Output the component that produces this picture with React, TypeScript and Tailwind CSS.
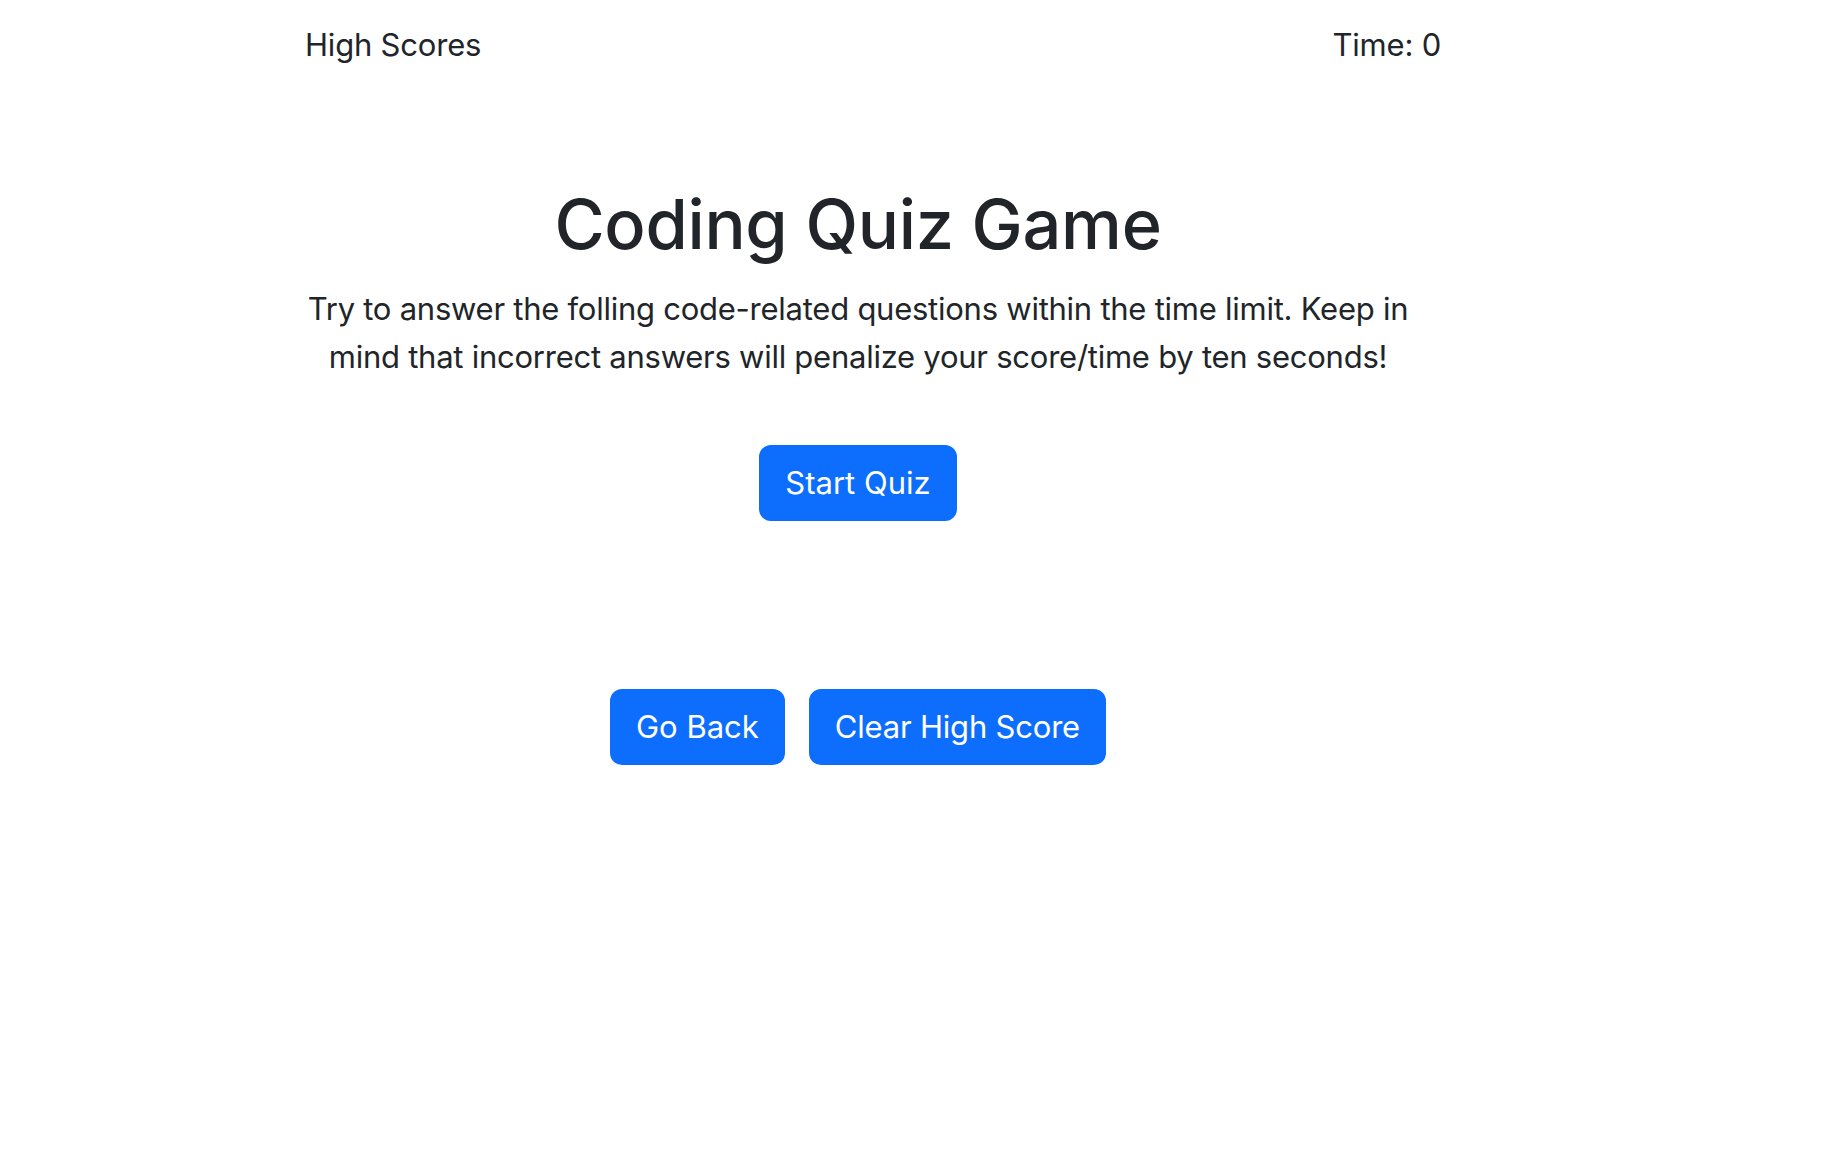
const App = () => {
  return (
    <div className="min-h-screen bg-white font-['Inter',sans-serif] text-[#212529]">
      <header className="ml-[305px] flex w-[1136px] justify-between pt-[21px] text-[31px] leading-[48px] tracking-[-0.2px]">
        <a href="#">High Scores</a>
        <p>Time: 0</p>
      </header>

      <main className="ml-[305px] flex w-[1106px] flex-col items-center text-center">
        <h1 className="mt-[115px] text-[68.5px] font-medium leading-[1.2] tracking-[-0.3px]">
          Coding Quiz Game
        </h1>
        <p className="mt-[19px] text-[31px] leading-[48px] tracking-[-0.25px]">
          Try to answer the folling code-related questions within the time
          limit. Keep in mind that incorrect answers will penalize your
          score/time by ten seconds!
        </p>
        <button className="mt-[64px] rounded-[12px] border-2 border-[#0d6efd] bg-[#0d6efd] px-[24px] py-[12px] text-[31px] leading-[48px] text-white">
          Start Quiz
        </button>
        <div className="mt-[168px] flex gap-[24px]">
          <button className="rounded-[12px] border-2 border-[#0d6efd] bg-[#0d6efd] px-[24px] py-[12px] text-[31px] leading-[48px] text-white">
            Go Back
          </button>
          <button className="rounded-[12px] border-2 border-[#0d6efd] bg-[#0d6efd] px-[24px] py-[12px] text-[31px] leading-[48px] tracking-[-0.2px] text-white">
            Clear High Score
          </button>
        </div>
      </main>
    </div>
  );
};

export default App;
